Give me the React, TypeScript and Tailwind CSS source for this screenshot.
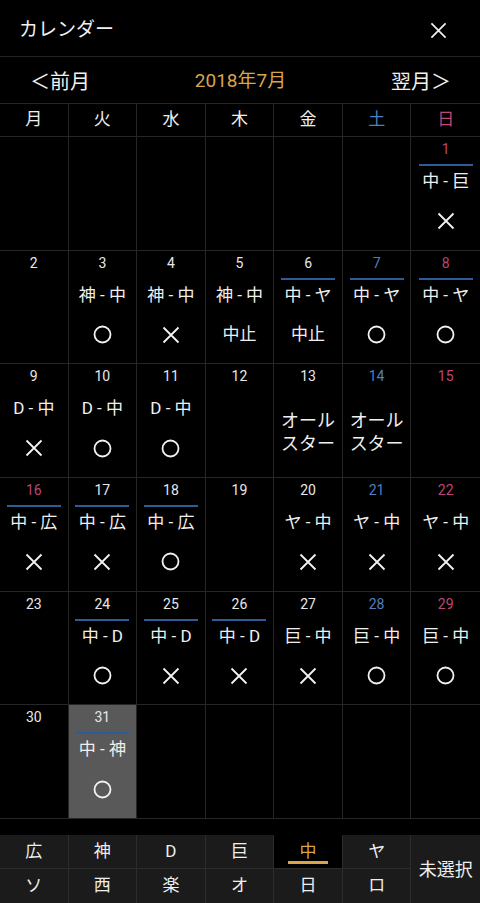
import React from "react";

type Day = {
  n?: number;
  color?: "blue" | "pink";
  line?: boolean;
  match?: string;
  result?: "o" | "x" | "中止";
  allstar?: boolean;
  selected?: boolean;
};

const weeks: Day[][] = [
  [{}, {}, {}, {}, {}, {}, { n: 1, color: "pink", line: true, match: "中 - 巨", result: "x" }],
  [
    { n: 2 },
    { n: 3, match: "神 - 中", result: "o" },
    { n: 4, match: "神 - 中", result: "x" },
    { n: 5, match: "神 - 中", result: "中止" },
    { n: 6, line: true, match: "中 - ヤ", result: "中止" },
    { n: 7, color: "blue", line: true, match: "中 - ヤ", result: "o" },
    { n: 8, color: "pink", line: true, match: "中 - ヤ", result: "o" },
  ],
  [
    { n: 9, match: "D - 中", result: "x" },
    { n: 10, match: "D - 中", result: "o" },
    { n: 11, match: "D - 中", result: "o" },
    { n: 12 },
    { n: 13, allstar: true },
    { n: 14, color: "blue", allstar: true },
    { n: 15, color: "pink" },
  ],
  [
    { n: 16, color: "pink", line: true, match: "中 - 広", result: "x" },
    { n: 17, line: true, match: "中 - 広", result: "x" },
    { n: 18, line: true, match: "中 - 広", result: "o" },
    { n: 19 },
    { n: 20, match: "ヤ - 中", result: "x" },
    { n: 21, color: "blue", match: "ヤ - 中", result: "x" },
    { n: 22, color: "pink", match: "ヤ - 中", result: "x" },
  ],
  [
    { n: 23 },
    { n: 24, line: true, match: "中 - D", result: "o" },
    { n: 25, line: true, match: "中 - D", result: "x" },
    { n: 26, line: true, match: "中 - D", result: "x" },
    { n: 27, match: "巨 - 中", result: "x" },
    { n: 28, color: "blue", match: "巨 - 中", result: "o" },
    { n: 29, color: "pink", match: "巨 - 中", result: "o" },
  ],
  [{ n: 30 }, { n: 31, line: true, match: "中 - 神", result: "o", selected: true }, {}, {}, {}, {}, {}],
];

const weekdays = ["月", "火", "水", "木", "金", "土", "日"];
const teamsTop = ["広", "神", "D", "巨", "中", "ヤ"];
const teamsBottom = ["ソ", "西", "楽", "オ", "日", "ロ"];

function Circle() {
  return (
    <svg width="19" height="19" viewBox="0 0 19 19">
      <circle cx="9.5" cy="9.5" r="8" fill="none" stroke="#f2f2f2" strokeWidth="1.8" />
    </svg>
  );
}

function Cross({ size = 18 }: { size?: number }) {
  return (
    <svg width={size} height={size} viewBox="0 0 18 18">
      <path d="M1.5 1.5 L16.5 16.5 M16.5 1.5 L1.5 16.5" stroke="#f2f2f2" strokeWidth="1.8" />
    </svg>
  );
}

function DayCell({ d, last }: { d: Day; last: boolean }) {
  const numColor =
    d.color === "blue" ? "text-[#4f7fc0]" : d.color === "pink" ? "text-[#bd4676]" : "text-[#e8e8e8]";
  return (
    <div
      className={`flex flex-col items-center border-b border-[#262626] ${last ? "" : "border-r"} ${
        d.selected ? "bg-[#595959]" : ""
      }`}
    >
      {d.n !== undefined && (
        <>
          <div className={`mt-[4px] h-[17px] text-[14px] leading-[17px] ${numColor}`}>{d.n}</div>
          <div className={`mt-[6px] h-[2px] w-[54px] ${d.line ? "bg-[#2d5c99]" : ""}`} />
          {d.match && (
            <div className="mt-[5px] h-[20px] text-[17px] leading-[20px] whitespace-pre text-[#f0f0f0]">
              {d.match}
            </div>
          )}
          {d.result && (
            <div className="mt-[18px] flex h-[24px] items-center justify-center text-[17px] text-[#f0f0f0]">
              {d.result === "o" ? <Circle /> : d.result === "x" ? <Cross /> : d.result}
            </div>
          )}
          {d.allstar && (
            <div className="mt-[16px] text-[18px] leading-[23px] text-[#f0f0f0]">
              <div>オール</div>
              <div>スター</div>
            </div>
          )}
        </>
      )}
    </div>
  );
}

export default function App() {
  return (
    <div
      className="flex h-[903px] w-[480px] flex-col overflow-hidden bg-black text-white"
      style={{ fontFamily: 'Roboto, "Noto Sans CJK JP", sans-serif' }}
    >
      {/* Title bar */}
      <div className="flex h-[57px] items-center justify-between border-b border-[#222] pl-[19px] pr-[33px] pt-[5px]">
        <span className="text-[19px] text-[#f2f2f2]">カレンダー</span>
        <Cross size={17} />
      </div>

      {/* Month navigation */}
      <div className="flex h-[47px] items-center justify-between border-b border-[#262626] pl-[30px] pr-[29px] pt-[3px]">
        <span className="text-[20px] text-[#f2f2f2]">＜前月</span>
        <span className="text-[19px] text-[#d9a54c]">2018年7月</span>
        <span className="text-[20px] text-[#f2f2f2]">翌月＞</span>
      </div>

      {/* Weekday header */}
      <div className="grid h-[33px] grid-cols-7 border-b border-[#262626]">
        {weekdays.map((w, i) => (
          <div
            key={w}
            className={`flex items-center justify-center text-[17px] ${i < 6 ? "border-r border-[#262626]" : ""} ${
              i === 5 ? "text-[#4f7fc0]" : i === 6 ? "text-[#bd4676]" : "text-[#eee]"
            }`}
          >
            {w}
          </div>
        ))}
      </div>

      {/* Calendar grid */}
      <div className="grid h-[682px] grid-cols-7 grid-rows-6">
        {weeks.map((week, wi) =>
          week.map((d, di) => <DayCell key={`${wi}-${di}`} d={d} last={di === 6} />)
        )}
      </div>

      <div className="h-[16px]" />

      {/* Team selector */}
      <div className="grid h-[68px] grid-cols-7 grid-rows-2 bg-[#1b1b1b] text-[17px] text-[#eee]">
        {teamsTop.map((t) => (
          <div
            key={t}
            className={`relative flex items-center justify-center border-b border-r border-[#2c2c2c] ${
              t === "中" ? "bg-black text-[#d9a54c]" : ""
            }`}
          >
            {t}
            {t === "中" && <div className="absolute bottom-[4px] h-[3px] w-[40px] bg-[#d9a54c]" />}
          </div>
        ))}
        <div className="row-span-2 flex items-center justify-center text-[18px]">未選択</div>
        {teamsBottom.map((t) => (
          <div key={t} className="flex items-center justify-center border-r border-[#2c2c2c]">
            {t}
          </div>
        ))}
      </div>
    </div>
  );
}
